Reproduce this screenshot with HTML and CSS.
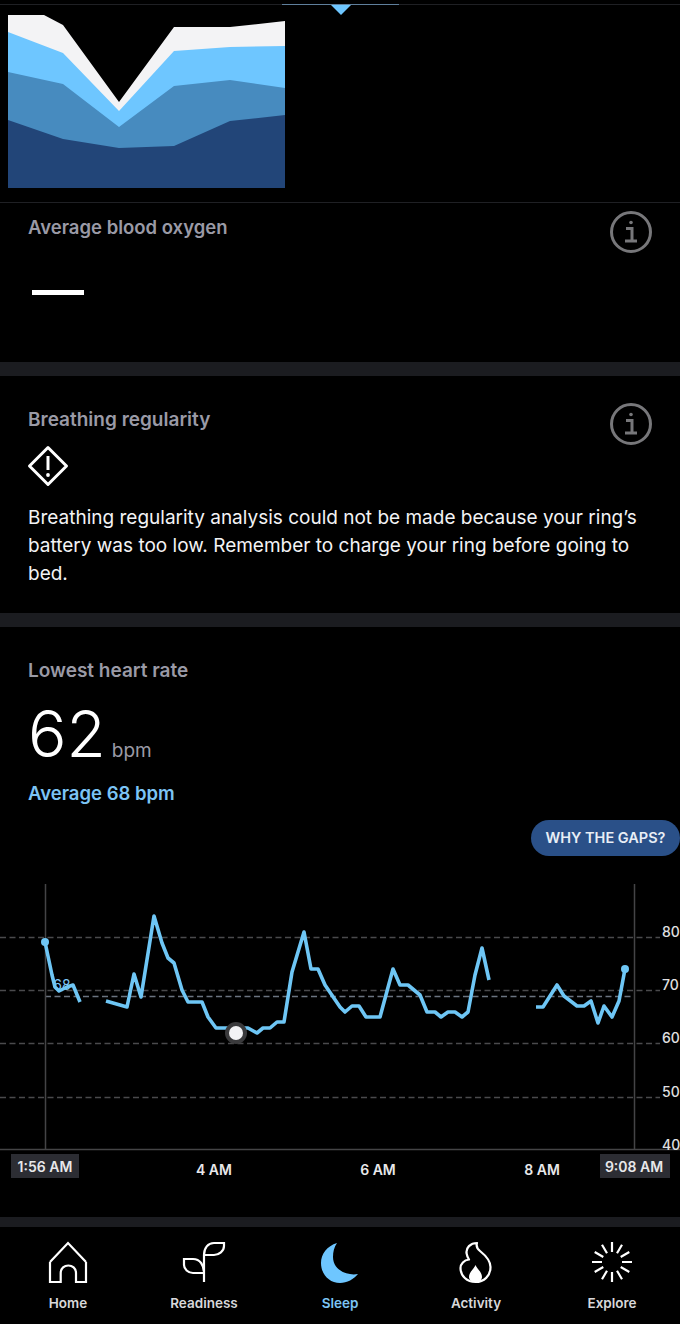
FILE: index.html
```html
<!DOCTYPE html>
<html lang="en">
<head>
    <meta charset="UTF-8">
    <meta name="viewport" content="width=device-width, initial-scale=1.0">
    <title>Sleep</title>
    <link rel="stylesheet" href="styles.css">
</head>
<body>

    <div class="app">
        <!-- Sleep stages chart, scrolled part way off the top -->
        <section class="stages">
            <div class="stages-tab"></div>
            <svg class="stages-chart" width="277" height="173" viewBox="0 0 277 173">
                <polygon fill="#f3f3f5" points="0,0 36,0 55,10 111,87 166,12 222,12 277,6 277,173 0,173"/>
                <polygon fill="#6ec6ff" points="0,17 55,38 111,96 166,36 222,32 277,31 277,173 0,173"/>
                <polygon fill="#478bbf" points="0,57 55,69 111,112 166,71 222,65 277,73 277,173 0,173"/>
                <polygon fill="#224578" points="0,105 55,124 111,133 166,131 222,106 277,100 277,173 0,173"/>
            </svg>
        </section>

        <section class="metric oxygen">
            <div class="metric-head">
                <h3>Average blood oxygen</h3>
                <svg class="info" width="42" height="42" viewBox="0 0 42 42">
                    <circle cx="21" cy="21" r="19.5" fill="none" stroke="#77777a" stroke-width="3"/>
                    <circle cx="21" cy="11.5" r="1.8" fill="#77777a"/>
                    <path d="M16 17.5h6v12M15 30h12" fill="none" stroke="#77777a" stroke-width="3"/>
                </svg>
            </div>
            <div class="no-value"></div>
        </section>

        <div class="divider"></div>

        <section class="metric breathing">
            <div class="metric-head">
                <h3>Breathing regularity</h3>
                <svg class="info" width="42" height="42" viewBox="0 0 42 42">
                    <circle cx="21" cy="21" r="19.5" fill="none" stroke="#77777a" stroke-width="3"/>
                    <circle cx="21" cy="11.5" r="1.8" fill="#77777a"/>
                    <path d="M16 17.5h6v12M15 30h12" fill="none" stroke="#77777a" stroke-width="3"/>
                </svg>
            </div>
            <svg class="warning" width="42" height="42" viewBox="0 0 42 42">
                <path d="M21 2.5 39.5 21 21 39.5 2.5 21Z" fill="none" stroke="#fff" stroke-width="3" stroke-linejoin="round"/>
                <path d="M21 11v14" stroke="#fff" stroke-width="3"/>
                <circle cx="21" cy="30" r="1.9" fill="#fff"/>
            </svg>
            <p>Breathing regularity analysis could not be made because your ring’s battery was too low. Remember to charge your ring before going to bed.</p>
        </section>

        <div class="divider"></div>

        <section class="heart">
            <h3>Lowest heart rate</h3>
            <div class="heart-value"><span class="big">62</span><span class="unit">bpm</span></div>
            <div class="heart-average">Average 68 bpm</div>
            <div class="gaps-row"><span class="gaps">WHY THE GAPS?</span></div>
            <svg class="hr-chart" width="680" height="306" viewBox="0 880 680 306">
                <g class="grid">
                    <path d="M0 937.5H660M0 990.5H660M0 1043.5H660M0 1097.5H660"/>
                </g>
                <path class="avg" d="M45 996.5H634"/>
                <path class="axis" d="M45.5 884V1150M634.5 884V1150M0 1149.5H680"/>
                <text class="mini" x="62" y="990" text-anchor="middle">68</text>
                <g class="hr-line">
                    <polyline points="45,942 52,975 55,987 59,991 67,987 73,985 80,1002"/>
                    <polyline points="106,1001 127,1007 134,974 141,997 154,916 162,943 168,958 174,963 182,990 188,1002 202,1002 208,1017 216,1028 248,1028 257,1033 263,1028 270,1028 277,1022 284,1022 292,972 304,932 311,969 318,969 325,985 340,1007 345,1012 352,1006 359,1006 366,1017 380,1017 393,969 400,985 408,985 420,995 427,1012 435,1012 441,1017 448,1012 455,1012 462,1017 468,1012 475,975 482,948 489,980"/>
                    <polyline points="536,1007 543,1007 557,985 564,996 577,1006 584,1006 591,1001 598,1023 604,1006 612,1017 619,1001 625,969"/>
                </g>
                <circle cx="45" cy="942" r="4" fill="#6ec6f5"/>
                <circle cx="625" cy="969" r="4" fill="#6ec6f5"/>
                <circle cx="236" cy="1033" r="11" fill="#3a3a3c"/>
                <circle cx="236" cy="1033" r="7" fill="#f3f3f5"/>
                <g class="y-labels">
                    <text x="662" y="937">80</text>
                    <text x="662" y="990">70</text>
                    <text x="662" y="1043">60</text>
                    <text x="662" y="1097">50</text>
                    <text x="662" y="1150">40</text>
                </g>
                <rect x="11" y="1154" width="68" height="24" fill="#2c2d33"/>
                <rect x="600" y="1154" width="70" height="24" fill="#2c2d33"/>
                <g class="x-labels">
                    <text x="45" y="1172">1:56 AM</text>
                    <text x="214" y="1175">4 AM</text>
                    <text x="378" y="1175">6 AM</text>
                    <text x="542" y="1175">8 AM</text>
                    <text x="634" y="1172">9:08 AM</text>
                </g>
            </svg>
        </section>

        <div class="divider short"></div>

        <nav class="tabs">
            <div class="tab">
                <svg width="44" height="44" viewBox="0 0 44 44">
                    <path d="M4 22 22 3 40 22M4 22V42H14.700V33C14.700 23 30 23 30 33V42H40V22" fill="none" stroke="#fff" stroke-width="2.200"/>
                </svg>
                <span>Home</span>
            </div>
            <div class="tab">
                <svg width="44" height="44" viewBox="0 0 44 44">
                    <path d="M22 42V15C22 8 26 3 32 3H42V6C42 11 37 15 32 15H22M22 33H11C6 33 2 29 2 25V19H11C18 19 22 25 22 33" fill="none" stroke="#fff" stroke-width="2.200"/>
                </svg>
                <span>Readiness</span>
            </div>
            <div class="tab active">
                <svg width="44" height="44" viewBox="0 0 44 44">
                    <path d="M19 3C9 6 3 14 3 23C3 34 11 43 22 43C29 43 36 39 40 34C29 36 15 30 15 17C15 12 16 7 19 3Z" fill="#6ec6ff"/>
                </svg>
                <span>Sleep</span>
            </div>
            <div class="tab">
                <svg width="44" height="44" viewBox="0 0 44 44">
                    <path d="M23 3C16 3 12 8 12.500 13C13 16 14 18 15 19.500C10 20 6.500 24 6.500 28C6.500 36 13 42 21.500 42C30 42 36.500 36 36.500 27C36.500 20 31 15 26 11C23.500 9 22 6 23 3Z" fill="none" stroke="#fff" stroke-width="2.200" stroke-linejoin="round"/>
                    <path d="M21.500 25C23 29 28 32 28 37C28 40 25 42 21.500 42C18 42 15 40 15 37C15 32 20 29 21.500 25Z" fill="#fff"/>
                </svg>
                <span>Activity</span>
            </div>
            <div class="tab">
                <svg width="44" height="44" viewBox="0 0 44 44">
                    <g stroke="#fff" stroke-width="2.200" fill="none">
                        <path d="M22 2V12M22 32V42M2 22H12M32 22H42M12 4.700 17 13.300M27 30.700 32 39.300M4.700 12 13.300 17M30.700 27 39.300 32M32 4.700 27 13.300M17 30.700 12 39.300M39.300 12 30.700 17M13.300 27 4.700 32"/>
                    </g>
                </svg>
                <span>Explore</span>
            </div>
        </nav>
    </div>

</body>
</html>
```

FILE: styles.css
```css
body {
    margin: 0;
    padding: 0;
    background-color: #000;
    color: #fff;
    font-family: Inter, "Liberation Sans", sans-serif;
}

.app {
    width: 680px;
    height: 1324px;
    overflow: hidden;
    display: flex;
    flex-direction: column;
}

h3 {
    margin: 0;
    font-size: 19px;
    font-weight: 600;
    line-height: 24px;
    color: #9a9aa6;
}

/* Top chart */
.stages {
    height: 199px;
    margin-top: 4px;
    border-top: 1px solid #1f2024;
    border-bottom: 1px solid #1f2024;
    box-sizing: border-box;
    padding: 10px 0 0 8px;
    position: relative;
}

.stages-chart {
    display: block;
}

.stages-tab {
    position: absolute;
    left: 282px;
    top: -1px;
    width: 117px;
    height: 1px;
    background-color: #5f7f9c;
}

.stages-tab::after {
    content: "";
    position: absolute;
    left: 49px;
    top: 1px;
    border-left: 10px solid transparent;
    border-right: 10px solid transparent;
    border-top: 10px solid #6ec6ff;
}

/* Metric sections */
.metric {
    padding: 12px 28px 0;
}

.metric-head {
    display: flex;
    justify-content: space-between;
    align-items: flex-start;
}

.oxygen {
    height: 159px;
    box-sizing: border-box;
}

.oxygen h3 {
    font-size: 18.500px;
}

.oxygen .info {
    margin-top: -4px;
}

.no-value {
    width: 52px;
    height: 5px;
    margin: 37px 0 0 4px;
    background-color: #fff;
}

.divider {
    height: 14px;
    flex: none;
    background-color: #1b1c20;
}

.divider.short {
    height: 10px;
}

.breathing {
    height: 237px;
    box-sizing: border-box;
    padding-top: 32px;
}

.breathing .info {
    margin-top: -5px;
}

.warning {
    display: block;
    margin-left: -1px;
}

.breathing p {
    margin: 17px 0 0;
    font-size: 19px;
    line-height: 28px;
    color: #f3f3f5;
}

/* Heart rate */
.heart {
    height: 590px;
    flex: none;
}

.heart h3 {
    padding: 32px 28px 0;
}

.heart-value {
    display: flex;
    align-items: baseline;
    padding: 15px 28px 0;
    height: 72px;
}

.big {
    font-size: 64px;
    font-weight: 300;
    line-height: 72px;
}

.unit {
    margin-left: 6px;
    font-size: 19px;
    color: #9a9aa6;
}

.heart-average {
    padding: 0 28px;
    margin-top: 11px;
    font-size: 18.500px;
    font-weight: 600;
    line-height: 24px;
    color: #7cc4f5;
}

.gaps-row {
    display: flex;
    justify-content: flex-end;
    margin-top: 15px;
}

.gaps {
    padding: 0 14.500px;
    height: 36px;
    line-height: 36px;
    border-radius: 18px;
    background-color: #2a5088;
    color: #e8eef6;
    font-size: 14.500px;
    font-weight: 600;
    white-space: nowrap;
}

.hr-chart {
    display: block;
    margin-top: 24px;
}

.grid path {
    stroke: #4a4a4c;
    stroke-width: 1.500;
    stroke-dasharray: 6 3.500;
    fill: none;
}

.avg {
    stroke: #6b7480;
    stroke-width: 1.500;
    stroke-dasharray: 6 3.500;
    fill: none;
}

.axis {
    stroke: #444446;
    stroke-width: 1.500;
    fill: none;
}

.hr-line polyline {
    fill: none;
    stroke: #6ec6f5;
    stroke-width: 3.600;
    stroke-linejoin: round;
}

.mini {
    font-size: 14px;
    fill: #7cc4f5;
}

.y-labels text {
    font-size: 14px;
    font-weight: 500;
    fill: #e0e0e2;
}

.x-labels text {
    font-size: 14px;
    font-weight: 600;
    fill: #e8e8ea;
    text-anchor: middle;
}

/* Bottom tabs */
.tabs {
    display: flex;
    flex: 1;
}

.tab {
    flex: 1;
    display: flex;
    flex-direction: column;
    align-items: center;
    padding-top: 13px;
    font-size: 13.500px;
    font-weight: 600;
    color: #d8d8da;
}

.tab span {
    margin-top: 11px;
}

.tab.active {
    color: #7cc4f5;
}
```
